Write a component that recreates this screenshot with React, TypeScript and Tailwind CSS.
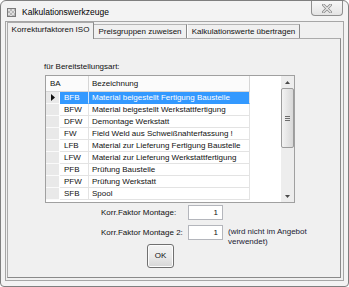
import React from "react";

const rows: [string, string][] = [
  ["BFB", "Material beigestellt Fertigung Baustelle"],
  ["BFW", "Material beigestellt Werkstattfertigung"],
  ["DFW", "Demontage Werkstatt"],
  ["FW", "Field Weld aus Schweißnahterfassung !"],
  ["LFB", "Material zur Lieferung Fertigung Baustelle"],
  ["LFW", "Material zur Lieferung Werkstattfertigung"],
  ["PFB", "Prüfung Baustelle"],
  ["PFW", "Prüfung Werkstatt"],
  ["SFB", "Spool"],
];

function AppIcon() {
  return (
    <svg width="9" height="9" viewBox="0 0 9 9" className="shrink-0">
      <rect x="0.5" y="0.5" width="8" height="8" fill="#b8b8b8" stroke="#7a7a7a" />
      <rect x="1" y="1" width="2" height="2" fill="#e0e0e0" />
      <rect x="5" y="1" width="2" height="2" fill="#e0e0e0" />
      <rect x="3" y="3" width="2" height="2" fill="#e0e0e0" />
      <rect x="1" y="5" width="2" height="2" fill="#e0e0e0" />
      <rect x="5" y="5" width="2" height="2" fill="#e0e0e0" />
      <rect x="3" y="7" width="2" height="1" fill="#e0e0e0" />
      <rect x="7" y="3" width="1" height="2" fill="#e0e0e0" />
    </svg>
  );
}

function CloseGlyph() {
  return (
    <svg width="10" height="9" viewBox="0 0 10 9">
      <path d="M1.5 1 L8.5 8 M8.5 1 L1.5 8" stroke="#8e8e8e" strokeWidth="2.8" strokeLinecap="square" />
      <path d="M1.5 1 L8.5 8 M8.5 1 L1.5 8" stroke="#ececec" strokeWidth="1.1" strokeLinecap="square" />
    </svg>
  );
}

export default function App() {
  return (
    <div className="w-[349px] h-[287px] bg-white font-['Liberation_Sans',Arial,sans-serif] text-[8px] leading-[10px] text-[#111111]">
      <div className="w-[349px] h-[287px] border border-[#7f7f7f] rounded-t-[6px] rounded-b-[4px] bg-[#f3f3f3] flex flex-col overflow-hidden">
        {/* title bar */}
        <div className="h-[20px] shrink-0 flex items-start">
          <div className="flex items-center mt-[6px] ml-[6px] gap-[6px] h-[10px]">
            <AppIcon />
            <span className="text-[8.5px] leading-[10px] text-black">Kalkulationswerkzeuge</span>
          </div>
          <div className="ml-auto mr-[5px] w-[32px] h-[15px] border border-t-0 border-[#8f8f8f] rounded-b-[4px] bg-gradient-to-b from-[#f8f8f8] to-[#e4e4e4] flex items-center justify-center">
            <CloseGlyph />
          </div>
        </div>

        {/* client area */}
        <div className="flex-1 mx-[4px] mb-[5px] border border-[#a6a6a6] bg-[#f0f0f0] pl-[1px] pr-[2px] pb-[2px] flex flex-col">
          {/* tab strip */}
          <div className="h-[16px] shrink-0 flex items-end">
            <div className="relative z-10 w-[87px] h-[17px] -mb-px border-l border-t border-r border-l-[#ababab] border-t-[#ababab] border-r-[#8a8a8a] bg-[#f0f0f0] flex items-center justify-center pb-[2px]">
              <span>Korrekturfaktoren ISO</span>
            </div>
            <div className="w-[93px] h-[14px] border-t border-r border-t-[#b5b5b5] border-r-[#8a8a8a] bg-[#f0f0f0] flex items-center justify-center">
              <span>Preisgruppen zuweisen</span>
            </div>
            <div className="w-[113px] h-[14px] border-l border-t border-r border-l-[#ffffff] border-t-[#b5b5b5] border-r-[#8a8a8a] bg-[#f0f0f0] flex items-center justify-center">
              <span>Kalkulationswerte übertragen</span>
            </div>
          </div>

          {/* tab page */}
          <div className="flex-1 border border-l-[#ababab] border-t-[#ababab] border-r-[#8a8a8a] border-b-[#8a8a8a] bg-[#f0f0f0] flex flex-col">
            <div className="mt-[23px] pl-[36px]">für Bereitstellungsart:</div>

            {/* grid */}
            <div className="mt-[3px] ml-[37px] w-[250px] h-[128px] border border-[#a0a0a0] bg-white flex">
              <div className="flex-1 flex flex-col">
                <div className="h-[16px] flex">
                  <div className="w-[43px] h-[16px] border-r border-b border-[#d6d6d6] bg-[#fbfbfb] pl-[4px] flex items-center">BA</div>
                  <div className="w-[161px] h-[16px] border-r border-b border-[#d6d6d6] bg-[#fbfbfb] pl-[3px] flex items-center">Bezeichnung</div>
                </div>
                {rows.map(([ba, bez], i) => {
                  const sel = i === 0;
                  return (
                    <div key={ba} className="h-[12px] flex">
                      <div className="w-[14px] h-[12px] bg-[#e9e9e9] border-r border-b border-r-[#ffffff] border-b-[#fafafa] flex items-center justify-center">
                        {sel && (
                          <svg width="4" height="7" viewBox="0 0 4 7">
                            <path d="M0 0 L4 3.5 L0 7 Z" fill="#111111" />
                          </svg>
                        )}
                      </div>
                      <div
                        className={
                          sel
                            ? "w-[29px] h-[12px] border-r border-b border-r-[#cfe5ff] border-b-[#3399ff] bg-[#3399ff] text-white pl-[4px] flex items-center"
                            : "w-[29px] h-[12px] border-r border-b border-[#e3e3e3] pl-[4px] flex items-center"
                        }
                      >
                        {ba}
                      </div>
                      <div
                        className={
                          sel
                            ? "w-[161px] h-[12px] border-r border-b border-r-[#e3e3e3] border-b-[#3399ff] bg-[#3399ff] text-white pl-[3px] flex items-center whitespace-nowrap overflow-hidden"
                            : "w-[161px] h-[12px] border-r border-b border-[#e3e3e3] pl-[3px] flex items-center whitespace-nowrap overflow-hidden"
                        }
                      >
                        {bez}
                      </div>
                    </div>
                  );
                })}
              </div>

              {/* scrollbar */}
              <div className="w-[13px] h-full bg-[#ededed] flex flex-col">
                <div className="h-[12px] flex items-center justify-center">
                  <svg width="5" height="3" viewBox="0 0 5 3">
                    <path d="M0 3 L2.5 0 L5 3 Z" fill="#4a4a4a" />
                  </svg>
                </div>
                <div className="h-[60px] border border-[#9c9c9c] rounded-[2px] bg-gradient-to-r from-[#f3f3f3] to-[#d8d8d8] flex flex-col items-center justify-center gap-[1px]">
                  <div className="w-[5px] h-px bg-[#6d6d6d]" />
                  <div className="w-[5px] h-px bg-[#6d6d6d]" />
                  <div className="w-[5px] h-px bg-[#6d6d6d]" />
                </div>
                <div className="flex-1" />
                <div className="h-[12px] flex items-center justify-center">
                  <svg width="5" height="3" viewBox="0 0 5 3">
                    <path d="M0 0 L2.5 3 L5 0 Z" fill="#4a4a4a" />
                  </svg>
                </div>
              </div>
            </div>

            {/* row 1 */}
            <div className="mt-[2px] pl-[93px] h-[15px] flex items-center">
              <div className="w-[87px]">Korr.Faktor Montage:</div>
              <div className="w-[35px] h-[15px] border border-[#b4b6bc] bg-white pr-[4px] flex items-center justify-end">1</div>
            </div>

            {/* row 2 */}
            <div className="mt-[5px] pl-[93px] h-[15px] flex items-center">
              <div className="w-[87px]">Korr.Faktor Montage 2:</div>
              <div className="w-[35px] h-[15px] border border-[#b4b6bc] bg-white pr-[4px] flex items-center justify-end">1</div>
              <div className="ml-[5px] self-start mt-[2px] text-[#222233] whitespace-nowrap">
                <div>(wird nicht im Angebot</div>
                <div>verwendet)</div>
              </div>
            </div>

            {/* OK */}
            <div className="mt-[4px] pl-[139px]">
              <div className="w-[27px] h-[24px] border border-[#707070] rounded-[3px] bg-gradient-to-b from-[#f3f3f3] via-[#ebebeb] to-[#d6d6d6] flex items-center justify-center shadow-[inset_0_0_0_1px_#fcfcfc]">
                OK
              </div>
            </div>
          </div>
        </div>
      </div>
    </div>
  );
}
